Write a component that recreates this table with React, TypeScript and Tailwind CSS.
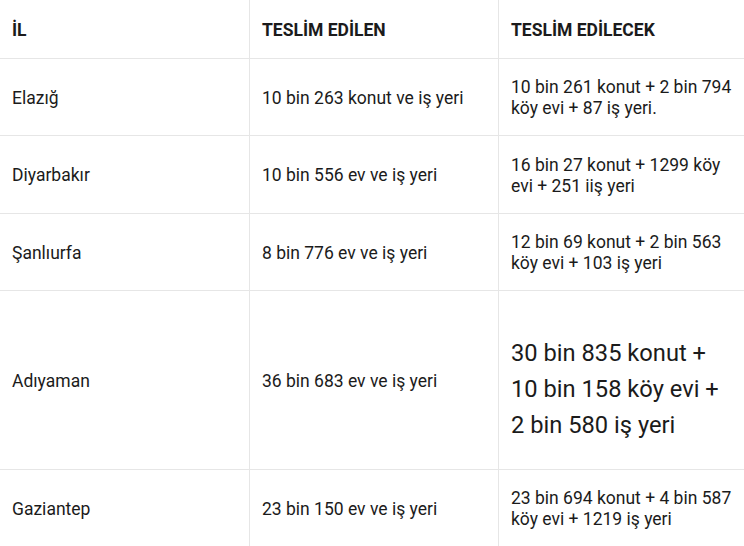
const rows = [
  { il: "Elazığ", edilen: "10 bin 263 konut ve iş yeri", edilecek: "10 bin 261 konut + 2 bin 794 köy evi + 87 iş yeri.", h: "h-[77px]" },
  { il: "Diyarbakır", edilen: "10 bin 556 ev ve iş yeri", edilecek: "16 bin 27 konut + 1299 köy evi + 251 iiş yeri", h: "h-[78px]" },
  { il: "Şanlıurfa", edilen: "8 bin 776 ev ve iş yeri", edilecek: "12 bin 69 konut + 2 bin 563 köy evi + 103 iş yeri", h: "h-[77px]" },
  { il: "Adıyaman", edilen: "36 bin 683 ev ve iş yeri", edilecek: "30 bin 835 konut + 10 bin 158 köy evi + 2 bin 580 iş yeri", h: "h-[179px]", big: true },
  { il: "Gaziantep", edilen: "23 bin 150 ev ve iş yeri", edilecek: "23 bin 694 konut + 4 bin 587 köy evi + 1219 iş yeri", h: "h-[77px]" },
];

export default function App() {
  return (
    <div className="w-[744px] h-[546px] overflow-hidden bg-white text-[#1b1b1b] font-['Roboto',sans-serif] text-[17.5px] leading-[21px]">
      <div className="w-[747px]">
        {/* Header */}
        <div className="grid grid-cols-[249px_249px_249px] h-[58px]">
          <div className="flex items-center px-3 pt-[2px] font-bold">İL</div>
          <div className="flex items-center px-3 pt-[2px] font-bold border-l border-[#e6e6e6]">TESLİM EDİLEN</div>
          <div className="flex items-center px-3 pt-[2px] font-bold border-l border-[#e6e6e6]">TESLİM EDİLECEK</div>
        </div>

        {rows.map((r) => (
          <div key={r.il} className={`grid grid-cols-[249px_249px_249px] border-t border-[#e6e6e6] ${r.h}`}>
            <div className="flex items-center px-3 pt-[2px]">{r.il}</div>
            <div className="flex items-center px-3 pt-[2px] border-l border-[#e6e6e6]">{r.edilen}</div>
            <div className="flex items-center px-3 pt-[2px] border-l border-[#e6e6e6]">
              {r.big ? (
                <p className="text-[23.7px] leading-[36px] pt-[15px]">{r.edilecek}</p>
              ) : (
                <p>{r.edilecek}</p>
              )}
            </div>
          </div>
        ))}
      </div>
    </div>
  );
}
